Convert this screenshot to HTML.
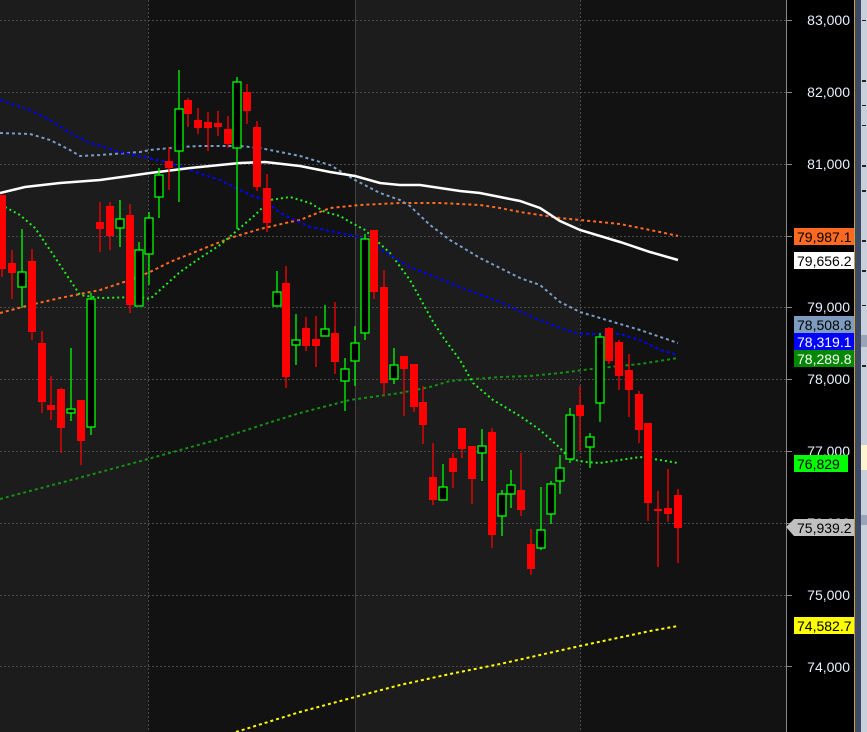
<!DOCTYPE html>
<html><head><meta charset="utf-8"><style>
html,body{margin:0;padding:0;background:#000;}
svg{display:block;}
text{font-family:"Liberation Sans",sans-serif;font-size:14px;}
</style></head><body>
<svg width="867" height="732" viewBox="0 0 867 732" xmlns="http://www.w3.org/2000/svg">
<rect x="0" y="0" width="148" height="732" fill="#1c1c1c"/>
<rect x="148" y="0" width="207" height="732" fill="#121212"/>
<rect x="355" y="0" width="225" height="732" fill="#1c1c1c"/>
<rect x="580" y="0" width="206" height="732" fill="#121212"/>
<rect x="786" y="0" width="68" height="732" fill="#000"/>
<g stroke="#4a4a4a" stroke-width="1" stroke-dasharray="2,2">
<line x1="0" y1="20.5" x2="786" y2="20.5"/><line x1="0" y1="92.5" x2="786" y2="92.5"/>
<line x1="0" y1="164.5" x2="786" y2="164.5"/><line x1="0" y1="236.5" x2="786" y2="236.5"/>
<line x1="0" y1="307.5" x2="786" y2="307.5"/><line x1="0" y1="379.5" x2="786" y2="379.5"/>
<line x1="0" y1="451.5" x2="786" y2="451.5"/><line x1="0" y1="523.5" x2="786" y2="523.5"/>
<line x1="0" y1="595.5" x2="786" y2="595.5"/><line x1="0" y1="666.5" x2="786" y2="666.5"/>
<line x1="148.5" y1="0" x2="148.5" y2="732"/><line x1="580.5" y1="0" x2="580.5" y2="732"/>
</g>
<line x1="355.5" y1="0" x2="355.5" y2="732" stroke="#444"/>
<line x1="786.5" y1="0" x2="786.5" y2="732" stroke="#888"/>
<g stroke="#888"><line x1="786" y1="20.5" x2="792" y2="20.5"/><line x1="786" y1="92.5" x2="792" y2="92.5"/><line x1="786" y1="164.5" x2="792" y2="164.5"/><line x1="786" y1="236.5" x2="792" y2="236.5"/><line x1="786" y1="307.5" x2="792" y2="307.5"/><line x1="786" y1="379.5" x2="792" y2="379.5"/><line x1="786" y1="451.5" x2="792" y2="451.5"/><line x1="786" y1="523.5" x2="792" y2="523.5"/><line x1="786" y1="595.5" x2="792" y2="595.5"/><line x1="786" y1="666.5" x2="792" y2="666.5"/></g>

<!-- moving averages -->
<polyline fill="none" stroke="#ffff00" stroke-width="2" stroke-dasharray="3,3" points="236,732 300,712 355,697 400,685 450,674 500,664 580,646 650,631 678,626"/>
<polyline fill="none" stroke="#139013" stroke-width="2" stroke-dasharray="3,3" points="0,499 75,479 148,459 216,440 268,423 300,413 350,400 400,393 430,387 450,381 500,377 530,376 560,373 600,368 640,364 678,358"/>
<polyline fill="none" stroke="#ff6a20" stroke-width="2" stroke-dasharray="3,3" points="0,313 30,305 60,298 100,290 130,280 150,272 170,262 200,250 230,238 260,229 290,222 300,220 330,208 360,205 400,203 440,203 480,205 500,208 520,212 560,218 580,220 620,224 660,232 678,236"/>
<polyline fill="none" stroke="#22ee22" stroke-width="2" stroke-dasharray="2,3" points="5,207 20,215 35,228 50,250 70,280 80,295 100,298 140,297 150,299 160,290 180,272 200,258 220,245 240,228 255,215 270,200 290,197 310,203 325,212 340,216 350,222 365,230 390,253 410,280 432,320 445,340 460,360 473,383 493,400 520,416 540,430 560,448 570,459 585,462 600,463 620,460 640,457 660,460 678,463"/>
<polyline fill="none" stroke="#7a9cc8" stroke-width="2" stroke-dasharray="3,3" points="0,133 30,134 50,140 70,150 80,156 100,155 140,152 150,150 180,147 200,146 240,146 260,148 300,156 330,165 355,180 380,193 400,200 410,206 430,225 450,240 480,258 500,268 520,278 540,285 560,302 580,312 600,318 640,330 678,343"/>
<polyline fill="none" stroke="#0000ff" stroke-width="2" stroke-dasharray="3,3" points="0,100 30,110 50,120 70,133 90,143 120,152 148,158 170,163 190,170 220,180 250,195 265,200 280,213 310,227 360,237 410,267 460,287 500,302 530,316 560,328 580,334 620,334 640,340 660,350 678,355"/>
<polyline fill="none" stroke="#ffffff" stroke-width="2.5" points="0,193 25,187 60,183 100,180 150,173 190,168 240,163 265,162 300,166 330,172 355,176 380,183 400,185 420,185 440,188 460,191 480,193 500,197 520,201 540,208 560,221 580,230 620,242 650,252 678,260"/>

<!-- candles -->
<g stroke-width="1.3">
<line x1="2" y1="195" x2="2" y2="277" stroke="#f00"/><rect x="-2" y="195" width="8" height="74" fill="#f00"/>
<line x1="12" y1="250" x2="12" y2="299" stroke="#f00"/><rect x="8" y="263" width="8" height="10" fill="#f00"/>
<line x1="22" y1="229" x2="22" y2="308" stroke="#0f0"/><rect x="18" y="272" width="8" height="15" fill="#000" stroke="#0f0"/>
<line x1="32" y1="249" x2="32" y2="340" stroke="#f00"/><rect x="28" y="261" width="8" height="71" fill="#f00"/>
<line x1="42" y1="331" x2="42" y2="413" stroke="#f00"/><rect x="38" y="343" width="8" height="59" fill="#f00"/>
<line x1="51" y1="376" x2="51" y2="420" stroke="#f00"/><rect x="47" y="405" width="8" height="5" fill="#f00"/>
<line x1="61" y1="388" x2="61" y2="453" stroke="#f00"/><rect x="57" y="389" width="8" height="39" fill="#f00"/>
<line x1="71" y1="348" x2="71" y2="421" stroke="#0f0"/><rect x="67" y="409" width="8" height="4" fill="#000" stroke="#0f0"/>
<line x1="81" y1="400" x2="81" y2="465" stroke="#f00"/><rect x="77" y="400" width="8" height="41" fill="#f00"/>
<line x1="91" y1="293" x2="91" y2="435" stroke="#0f0"/><rect x="87" y="299" width="8" height="128" fill="#000" stroke="#0f0"/>
<line x1="100" y1="202" x2="100" y2="252" stroke="#f00"/><rect x="96" y="222" width="8" height="7" fill="#f00"/>
<line x1="110" y1="202" x2="110" y2="250" stroke="#f00"/><rect x="106" y="206" width="8" height="30" fill="#f00"/>
<line x1="120" y1="200" x2="120" y2="247" stroke="#0f0"/><rect x="116" y="219" width="8" height="9" fill="#000" stroke="#0f0"/>
<line x1="130" y1="204" x2="130" y2="313" stroke="#f00"/><rect x="126" y="215" width="8" height="90" fill="#f00"/>
<line x1="139" y1="242" x2="139" y2="306" stroke="#0f0"/><rect x="135" y="250" width="8" height="56" fill="#000" stroke="#0f0"/>
<line x1="149" y1="212" x2="149" y2="285" stroke="#0f0"/><rect x="145" y="218" width="8" height="36" fill="#000" stroke="#0f0"/>
<line x1="159" y1="168" x2="159" y2="218" stroke="#0f0"/><rect x="155" y="175" width="8" height="22" fill="#000" stroke="#0f0"/>
<line x1="169" y1="147" x2="169" y2="190" stroke="#f00"/><rect x="165" y="161" width="8" height="7" fill="#f00"/>
<line x1="179" y1="70" x2="179" y2="202" stroke="#0f0"/><rect x="175" y="109" width="8" height="42" fill="#000" stroke="#0f0"/>
<line x1="188" y1="98" x2="188" y2="127" stroke="#f00"/><rect x="184" y="100" width="8" height="14" fill="#f00"/>
<line x1="198" y1="108" x2="198" y2="134" stroke="#f00"/><rect x="194" y="120" width="8" height="8" fill="#f00"/>
<line x1="208" y1="112" x2="208" y2="151" stroke="#f00"/><rect x="204" y="122" width="8" height="6" fill="#f00"/>
<line x1="218" y1="111" x2="218" y2="136" stroke="#f00"/><rect x="214" y="123" width="8" height="4" fill="#f00"/>
<line x1="228" y1="116" x2="228" y2="148" stroke="#f00"/><rect x="224" y="129" width="8" height="15" fill="#f00"/>
<line x1="237" y1="77" x2="237" y2="229" stroke="#0f0"/><rect x="233" y="82" width="8" height="66" fill="#000" stroke="#0f0"/>
<line x1="247" y1="84" x2="247" y2="124" stroke="#f00"/><rect x="243" y="92" width="8" height="19" fill="#f00"/>
<line x1="257" y1="121" x2="257" y2="191" stroke="#f00"/><rect x="253" y="127" width="8" height="60" fill="#f00"/>
<line x1="267" y1="174" x2="267" y2="232" stroke="#f00"/><rect x="263" y="188" width="8" height="35" fill="#f00"/>
<line x1="277" y1="271" x2="277" y2="306" stroke="#0f0"/><rect x="273" y="292" width="8" height="14" fill="#000" stroke="#0f0"/>
<line x1="286" y1="266" x2="286" y2="388" stroke="#f00"/><rect x="282" y="283" width="8" height="94" fill="#f00"/>
<line x1="296" y1="314" x2="296" y2="365" stroke="#0f0"/><rect x="292" y="340" width="8" height="5" fill="#000" stroke="#0f0"/>
<line x1="306" y1="317" x2="306" y2="351" stroke="#f00"/><rect x="302" y="328" width="8" height="18" fill="#f00"/>
<line x1="316" y1="316" x2="316" y2="367" stroke="#f00"/><rect x="312" y="339" width="8" height="7" fill="#f00"/>
<line x1="325" y1="305" x2="325" y2="336" stroke="#0f0"/><rect x="321" y="329" width="8" height="7" fill="#000" stroke="#0f0"/>
<line x1="335" y1="302" x2="335" y2="374" stroke="#f00"/><rect x="331" y="333" width="8" height="29" fill="#f00"/>
<line x1="345" y1="358" x2="345" y2="411" stroke="#0f0"/><rect x="341" y="369" width="8" height="12" fill="#000" stroke="#0f0"/>
<line x1="355" y1="326" x2="355" y2="386" stroke="#0f0"/><rect x="351" y="343" width="8" height="18" fill="#000" stroke="#0f0"/>
<line x1="365" y1="234" x2="365" y2="340" stroke="#0f0"/><rect x="361" y="239" width="8" height="94" fill="#000" stroke="#0f0"/>
<line x1="374" y1="230" x2="374" y2="299" stroke="#f00"/><rect x="370" y="230" width="8" height="62" fill="#f00"/>
<line x1="384" y1="270" x2="384" y2="395" stroke="#f00"/><rect x="380" y="287" width="8" height="96" fill="#f00"/>
<line x1="394" y1="348" x2="394" y2="384" stroke="#0f0"/><rect x="390" y="365" width="8" height="14" fill="#000" stroke="#0f0"/>
<line x1="404" y1="356" x2="404" y2="416" stroke="#f00"/><rect x="400" y="356" width="8" height="13" fill="#f00"/>
<line x1="414" y1="364" x2="414" y2="412" stroke="#f00"/><rect x="410" y="364" width="8" height="43" fill="#f00"/>
<line x1="423" y1="386" x2="423" y2="444" stroke="#f00"/><rect x="419" y="402" width="8" height="23" fill="#f00"/>
<line x1="433" y1="443" x2="433" y2="505" stroke="#f00"/><rect x="429" y="477" width="8" height="23" fill="#f00"/>
<line x1="443" y1="464" x2="443" y2="500" stroke="#0f0"/><rect x="439" y="487" width="8" height="13" fill="#000" stroke="#0f0"/>
<line x1="453" y1="453" x2="453" y2="488" stroke="#f00"/><rect x="449" y="458" width="8" height="14" fill="#f00"/>
<line x1="462" y1="428" x2="462" y2="458" stroke="#f00"/><rect x="458" y="428" width="8" height="21" fill="#f00"/>
<line x1="472" y1="446" x2="472" y2="504" stroke="#f00"/><rect x="468" y="446" width="8" height="33" fill="#f00"/>
<line x1="482" y1="429" x2="482" y2="481" stroke="#0f0"/><rect x="478" y="446" width="8" height="7" fill="#000" stroke="#0f0"/>
<line x1="492" y1="428" x2="492" y2="548" stroke="#f00"/><rect x="488" y="432" width="8" height="103" fill="#f00"/>
<line x1="502" y1="490" x2="502" y2="536" stroke="#0f0"/><rect x="498" y="494" width="8" height="22" fill="#000" stroke="#0f0"/>
<line x1="511" y1="470" x2="511" y2="508" stroke="#0f0"/><rect x="507" y="485" width="8" height="9" fill="#000" stroke="#0f0"/>
<line x1="521" y1="453" x2="521" y2="516" stroke="#f00"/><rect x="517" y="490" width="8" height="20" fill="#f00"/>
<line x1="531" y1="529" x2="531" y2="575" stroke="#f00"/><rect x="527" y="544" width="8" height="25" fill="#f00"/>
<line x1="541" y1="487" x2="541" y2="550" stroke="#0f0"/><rect x="537" y="530" width="8" height="18" fill="#000" stroke="#0f0"/>
<line x1="551" y1="481" x2="551" y2="524" stroke="#0f0"/><rect x="547" y="484" width="8" height="30" fill="#000" stroke="#0f0"/>
<line x1="560" y1="455" x2="560" y2="494" stroke="#0f0"/><rect x="556" y="468" width="8" height="13" fill="#000" stroke="#0f0"/>
<line x1="570" y1="408" x2="570" y2="463" stroke="#0f0"/><rect x="566" y="415" width="8" height="44" fill="#000" stroke="#0f0"/>
<line x1="580" y1="386" x2="580" y2="451" stroke="#f00"/><rect x="576" y="405" width="8" height="11" fill="#f00"/>
<line x1="590" y1="433" x2="590" y2="468" stroke="#0f0"/><rect x="586" y="437" width="8" height="10" fill="#000" stroke="#0f0"/>
<line x1="600" y1="333" x2="600" y2="422" stroke="#0f0"/><rect x="596" y="337" width="8" height="66" fill="#000" stroke="#0f0"/>
<line x1="609" y1="327" x2="609" y2="364" stroke="#f00"/><rect x="605" y="328" width="8" height="33" fill="#f00"/>
<line x1="619" y1="340" x2="619" y2="390" stroke="#f00"/><rect x="615" y="342" width="8" height="34" fill="#f00"/>
<line x1="629" y1="354" x2="629" y2="417" stroke="#f00"/><rect x="625" y="370" width="8" height="20" fill="#f00"/>
<line x1="639" y1="391" x2="639" y2="443" stroke="#f00"/><rect x="635" y="394" width="8" height="36" fill="#f00"/>
<line x1="648" y1="423" x2="648" y2="521" stroke="#f00"/><rect x="644" y="423" width="8" height="80" fill="#f00"/>
<line x1="658" y1="491" x2="658" y2="567" stroke="#f00"/><rect x="654" y="509" width="8" height="2" fill="#f00"/>
<line x1="668" y1="469" x2="668" y2="522" stroke="#f00"/><rect x="664" y="508" width="8" height="6" fill="#f00"/>
<line x1="678" y1="489" x2="678" y2="563" stroke="#f00"/><rect x="674" y="495" width="8" height="33" fill="#f00"/>
</g>

<!-- axis labels -->
<g fill="#e8f0ff" text-anchor="end">
<text x="850" y="25">83,000</text>
<text x="850" y="97">82,000</text>
<text x="850" y="169">81,000</text>
<text x="850" y="312">79,000</text>
<text x="850" y="384">78,000</text>
<text x="850" y="456">77,000</text>
<text x="850" y="528">76,000</text>
<text x="850" y="600">75,000</text>
<text x="850" y="672">74,000</text>
</g>
<rect x="794" y="228" width="60" height="17" fill="#ff6a20"/><text x="797" y="242" fill="#000">79,987.1</text>
<rect x="794" y="252" width="60" height="17" fill="#fff"/><text x="797" y="266" fill="#000">79,656.2</text>
<rect x="794" y="316" width="60" height="17" fill="#7d9cc0"/><text x="797" y="330" fill="#000">78,508.8</text>
<rect x="794" y="333" width="60" height="17" fill="#0000ff"/><text x="797" y="347" fill="#fff">78,319.1</text>
<rect x="794" y="350" width="60" height="17" fill="#008800"/><text x="797" y="364" fill="#fff">78,289.8</text>
<rect x="794" y="455" width="54" height="17" fill="#00ff00"/><text x="797" y="469" fill="#000">76,829</text>
<polygon points="786,527 794,519 854,519 854,536 794,536" fill="#c0c0c0"/><text x="797" y="533" fill="#000">75,939.2</text>
<rect x="794" y="617" width="60" height="17" fill="#ffff00"/><text x="797" y="631" fill="#000">74,582.7</text>

<!-- right strip -->
<rect x="854" y="0" width="1" height="732" fill="#c8a040"/>
<rect x="855" y="0" width="6" height="732" fill="#3c4a66"/>
<rect x="861" y="0" width="6" height="732" fill="#c8d0dc"/>
<g fill="#222"><rect x="862" y="20" width="4" height="1"/><rect x="862" y="80" width="4" height="2"/><rect x="862" y="105" width="4" height="1"/><rect x="862" y="125" width="4" height="1"/><rect x="862" y="165" width="4" height="2"/><rect x="862" y="190" width="4" height="2"/><rect x="862" y="240" width="4" height="2"/><rect x="862" y="270" width="4" height="2"/><rect x="862" y="305" width="4" height="1"/><rect x="862" y="365" width="4" height="2"/></g>
<rect x="861" y="335" width="6" height="12" fill="#9aa4b8"/>
<rect x="861" y="445" width="6" height="25" fill="#fff4d0"/>
<rect x="861" y="515" width="6" height="10" fill="#9aa4b8"/>
</svg>
</body></html>
